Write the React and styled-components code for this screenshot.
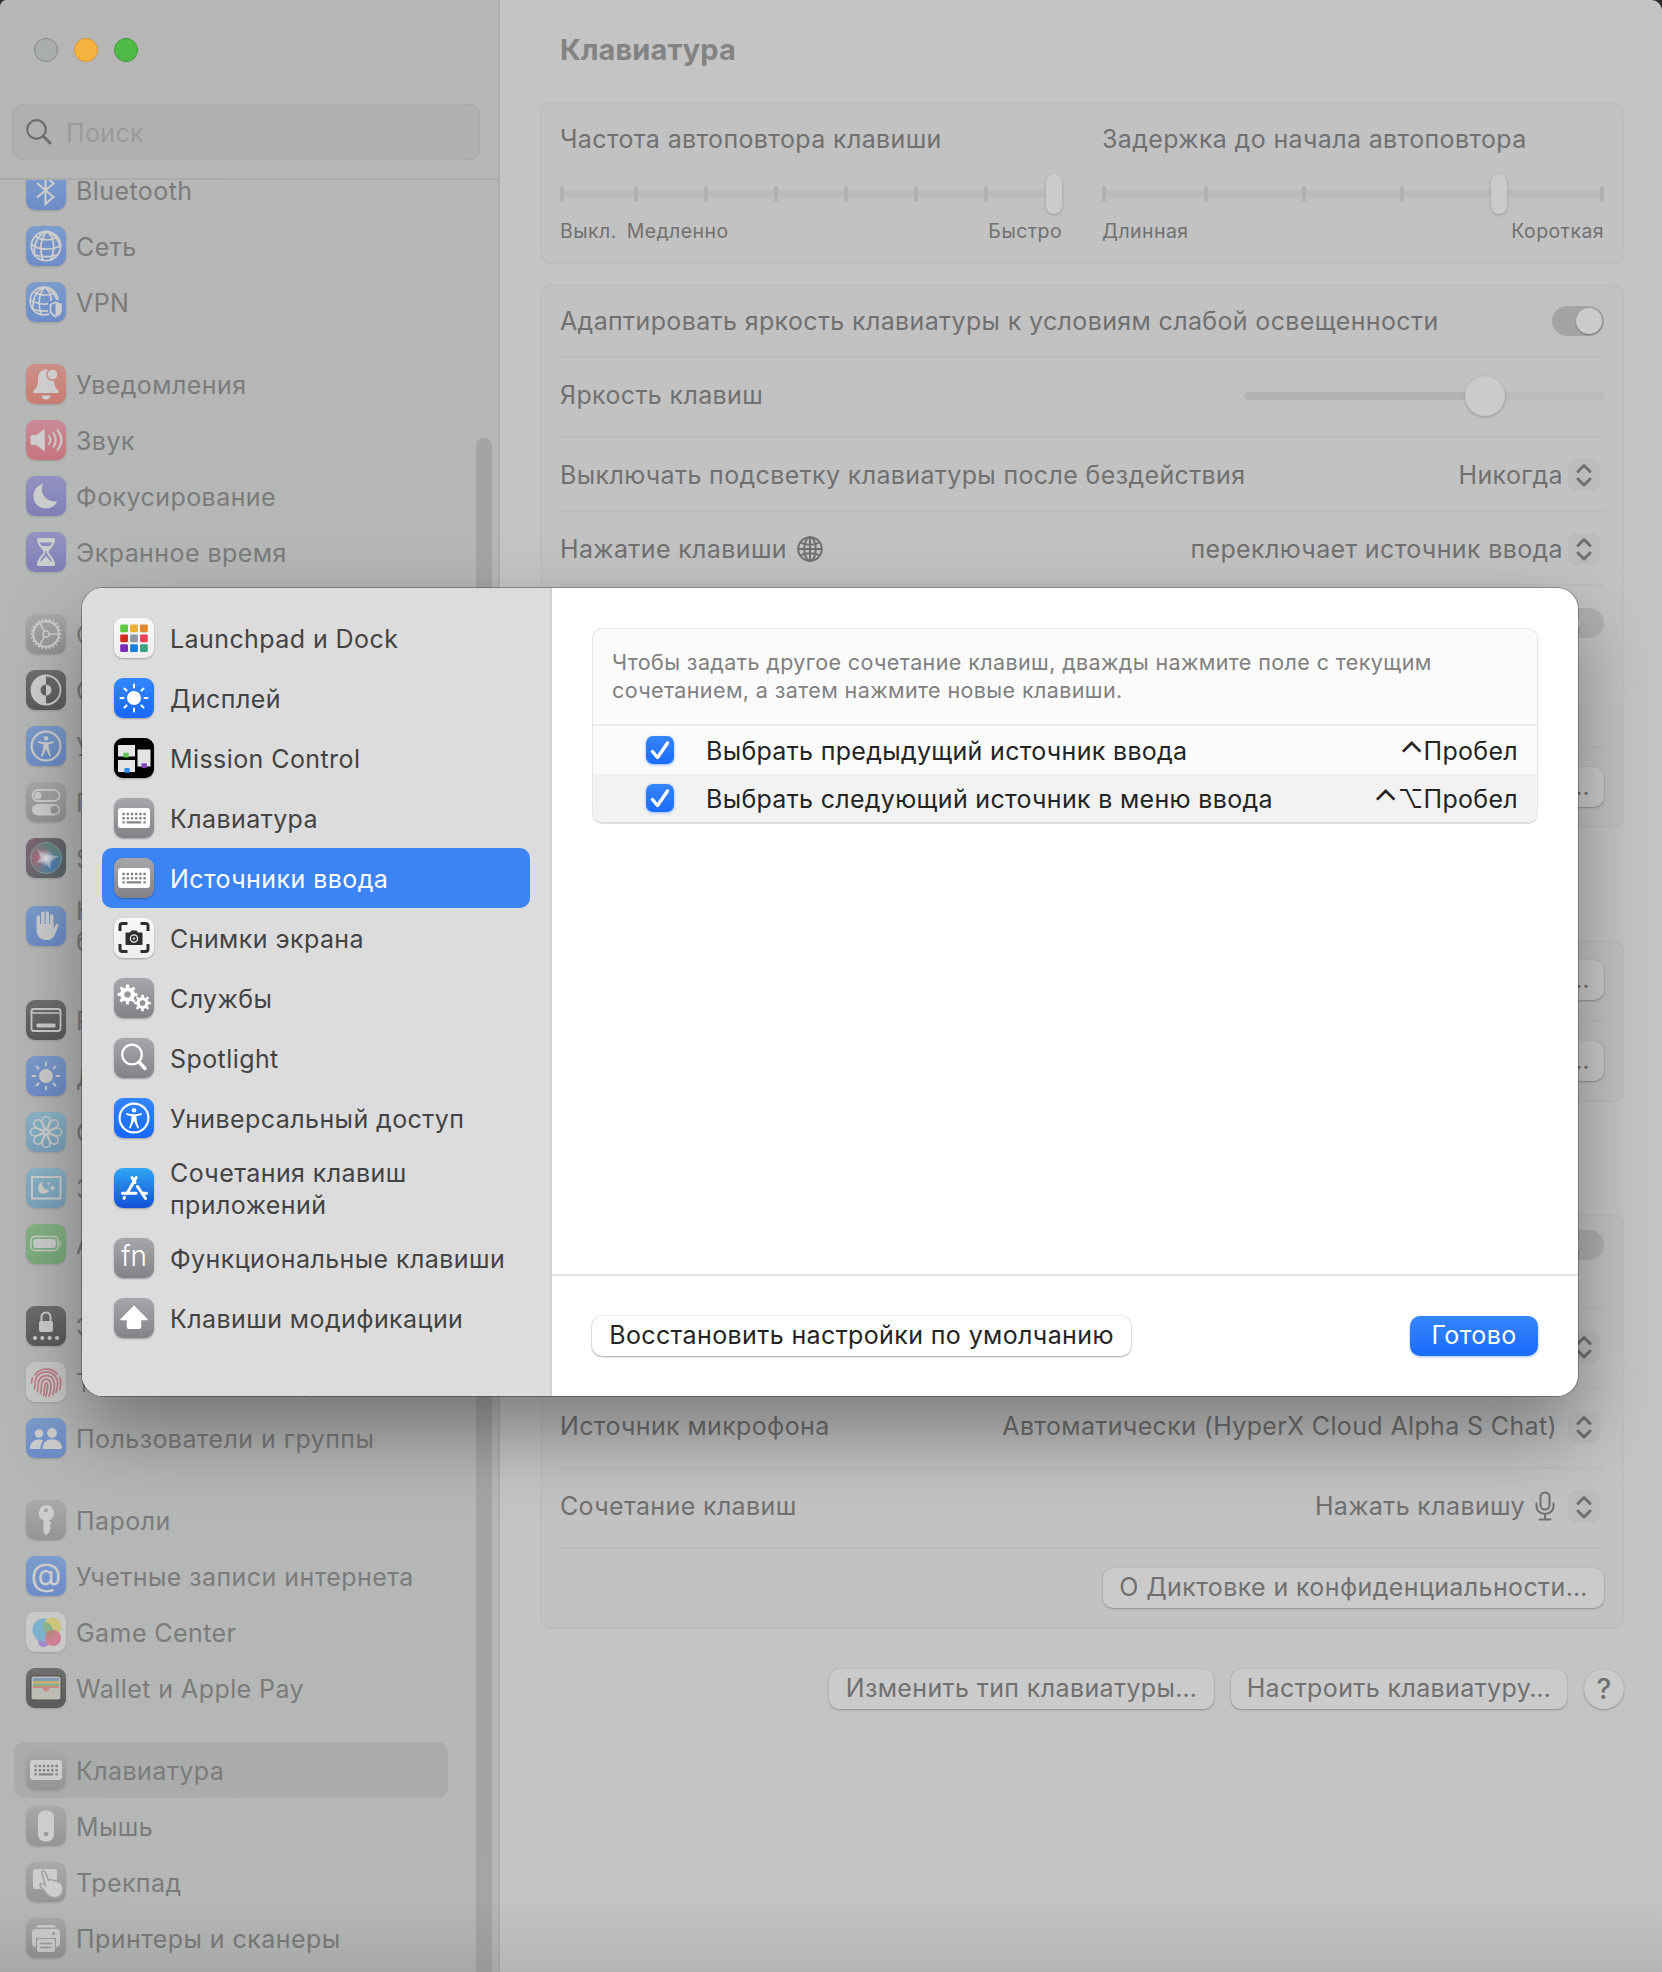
import React from 'react';
import styled, { createGlobalStyle, css } from 'styled-components';

const GlobalStyle = createGlobalStyle`
  *, *::before, *::after { box-sizing: border-box; }
  html, body { margin: 0; padding: 0; background: #2c2c2c; }
  body {
    width: 1662px;
    height: 1972px;
    overflow: hidden;
    font-family: Inter, "Liberation Sans", sans-serif;
    font-size: 25px;
    line-height: 32px;
    letter-spacing: 0.36px;
    -webkit-font-smoothing: antialiased;
  }
`;

/* ---------- glyphs, all on a 40 x 40 grid ---------- */

const stroke = (width = 2) => ({
  fill: 'none',
  stroke: 'currentColor',
  strokeWidth: width,
  strokeLinecap: 'round',
  strokeLinejoin: 'round',
});

const globeLines = (
  <>
    <circle cx="20" cy="20" r="14.6" />
    <path d="M21 5.5C15 11 13 22 17 34.2M21 5.5c7 5 9 17 3.500 28.500M21 5.500C14 7 7.500 15 8.500 28.500M21 5.500c7 2 12 9 13 15" />
    <path d="M9.500 10.500c6 4 15 5 22 .500M5.500 18.500c8 6 20 6 29 1.500M8 28.500c7 3 17 3 24 0" />
  </>
);

const Cog = ({ cx, cy, r }) => (
  <g transform={`translate(${cx} ${cy})`}>
    <circle r={r * 0.62} fill="none" stroke="currentColor" strokeWidth={r * 0.46} />
    {[0, 45, 90, 135, 180, 225, 270, 315].map((a) => (
      <rect key={a} x={-r * 0.17} y={-r * 1.16} width={r * 0.36} height={r * 0.5} rx={r * 0.1} fill="currentColor" transform={`rotate(${a})`} />
    ))}
  </g>
);

const keyDots = [];
[16, 20.2, 24.4].forEach((y, row) => {
  for (let i = 0; i < 6; i += 1) {
    if (row < 2 || i === 0 || i === 5) keyDots.push([8.4 + i * 4.2, y - 1.2]);
  }
});

const glyphs = {
  bluetooth: <path {...stroke(2)} strokeLinejoin="miter" d="M11.500 13.500 27.500 27 19.500 34V6l8 7.500L11.500 27" />,
  network: <g {...stroke(1.8)}>{globeLines}</g>,
  vpn: (
    <>
      <g {...stroke(1.8)} transform="translate(-1 0) scale(.95)">{globeLines}</g>
      <path fill="#7290c9" d="M29.500 17.500 38 20v8.500c0 4-4 7-8.500 8.500-4.500-2-7.500-4.500-7.500-8.500V20Z" />
      <path {...stroke(1.8)} d="M29.500 20.500 24.500 22.500v6c0 2.800 2 4.600 5 6" />
      <path fill="currentColor" d="m29.500 19.500 6.300 2.300v6.800c0 3.200-2.600 5.200-6.300 6.700Z" />
    </>
  ),
  bell: (
    <>
      <path fill="currentColor" d="M20 5.500c-5 0-8 4-8 9 0 7-1.500 9.500-4.500 12.500-.9 1-.4 2 .8 2h23.400c1.200 0 1.700-1 .8-2-3-3-4.500-5.500-4.500-12.500 0-5-3-9-8-9ZM15.500 31.500h9a4.500 4 0 0 1-9 0Z" />
      <circle cx="26.500" cy="10.500" r="6.300" fill="#c78a80" />
      <circle cx="26.500" cy="10.500" r="4.800" fill="currentColor" />
    </>
  ),
  sound: (
    <>
      <path fill="currentColor" d="M4.500 16.500a1.500 1.500 0 0 1 1.500-1.500h4.500l7-5.500c.6-.5 1.300-.2 1.300.6v20c0 .8-.7 1.100-1.300.6l-7-5.700H6a1.500 1.500 0 0 1-1.500-1.500Z" />
      <path {...stroke(1.900)} d="M23 16c1.800 2.500 1.800 5.500 0 8M27.300 13c3.200 4.500 3.200 9.500 0 14M31.500 10c5 6.500 5 13.500 0 20" />
    </>
  ),
  moon: <path fill="currentColor" d="M17 7.500C13 16 19 26.500 31.500 25.500 26 36 8 34.500 7.500 20.500 7.300 14.500 11 9.500 17 7.500Z" />,
  hourglass: (
    <>
      <rect x="11" y="6" width="18" height="4.500" rx="1.500" fill="currentColor" />
      <rect x="11" y="29.500" width="18" height="4.500" rx="1.500" fill="currentColor" />
      <path {...stroke(2)} d="M12.500 9c0 5.500 6 7.500 6 11s-6 5.500-6 11M27.500 9c0 5.500-6 7.500-6 11s6 5.500 6 11" />
      <path fill="currentColor" d="M15 14h10l-4.200 5h-1.600ZM20 24l6 6.500H14Z" />
    </>
  ),
  gear: (
    <>
      <g {...stroke(1.500)}>
        <circle cx="20" cy="20" r="12.800" strokeWidth="2" />
        <circle cx="20" cy="20" r="3" />
        <path d="M23 20h9.500M18.500 17.300 13.700 9M18.500 22.700 13.700 31" />
      </g>
      {Array.from({ length: 24 }, (_, i) => (
        <rect key={i} x="19.200" y="4.600" width="1.600" height="3" fill="currentColor" transform={`rotate(${i * 15} 20 20)`} />
      ))}
    </>
  ),
  appearance: (
    <>
      <circle cx="20" cy="20" r="14.500" fill="none" stroke="currentColor" strokeWidth="1.800" />
      <path fill="currentColor" d="M20 5.500v9a5.500 5.500 0 0 0 0 11v9a14.500 14.500 0 0 1 0-29ZM20 14.500a5.500 5.500 0 0 1 0 11Z" />
    </>
  ),
  accessibility: (
    <>
      <circle cx="20" cy="20" r="14.400" fill="none" stroke="currentColor" strokeWidth="2.200" />
      <circle cx="20" cy="12.300" r="2.200" fill="currentColor" />
      <path fill="currentColor" d="M13 15.300c4.500 1.400 9.500 1.400 14 0 1-.2 1.300 1.200.4 1.600l-4.900 1.400c0 4 .6 7 2.400 11 .4 1.100-1 1.700-1.600.6L20 23l-3.300 6.900c-.6 1.100-2 .5-1.600-.6 1.800-4 2.400-7 2.400-11l-4.900-1.400c-.9-.4-.6-1.800.4-1.600Z" />
    </>
  ),
  switches: (
    <>
      <rect x="6.500" y="8" width="27" height="11" rx="5.500" {...stroke(1.800)} />
      <circle cx="12" cy="13.500" r="3.600" fill="currentColor" />
      <rect x="6" y="22" width="28" height="11.500" rx="5.750" fill="currentColor" />
      <circle cx="28.500" cy="27.700" r="4" fill="#989898" />
    </>
  ),
  siri: (
    <>
      <defs>
        <radialGradient id="siri-rose" cx="0.25" cy="0.5" r="0.5">
          <stop offset="0" stopColor="#b5667c" />
          <stop offset="1" stopColor="#b5667c" stopOpacity="0" />
        </radialGradient>
        <radialGradient id="siri-blue" cx="0.7" cy="0.72" r="0.5">
          <stop offset="0" stopColor="#4d7cb8" />
          <stop offset="1" stopColor="#4d7cb8" stopOpacity="0" />
        </radialGradient>
        <radialGradient id="siri-glow" cx="0.5" cy="0.5" r="0.28">
          <stop offset="0" stopColor="#e2e4ea" />
          <stop offset="1" stopColor="#e2e4ea" stopOpacity="0" />
        </radialGradient>
      </defs>
      <circle cx="20" cy="20" r="15.500" fill="#658783" />
      <circle cx="20" cy="20" r="15.500" fill="url(#siri-rose)" />
      <circle cx="20" cy="20" r="15.500" fill="url(#siri-blue)" />
      <path fill="#c8ccd6" opacity=".6" d="m11 11 9 6 13 1-9 5 1 8-7-7-8 1 5-5Z" />
      <circle cx="20" cy="20" r="15.500" fill="url(#siri-glow)" />
      <circle cx="20" cy="20" r="15.500" fill="none" stroke="#8faaa9" strokeWidth="1" opacity=".7" />
    </>
  ),
  hand: (
    <>
      <path {...stroke(3.400)} d="M12.300 21V11M16.800 19V7.300M21.300 19V7M25.700 20V10" />
      <path fill="currentColor" d="M10.600 18h16.800v5l2.200-4c1.200-2.300 3.700-1.300 2.800 1l-3.700 9c-1.500 3.500-4 5-8 5-6.500 0-10.100-4-10.100-10Z" />
    </>
  ),
  dock: (
    <>
      <rect x="5.500" y="9" width="29" height="22" rx="2.500" {...stroke(1.800)} />
      <path {...stroke(1.500)} d="M6 13h28" />
      <rect x="10.500" y="23.500" width="19" height="4" rx="1" fill="currentColor" />
    </>
  ),
  sun: (
    <>
      <circle cx="20" cy="20" r="7" fill="currentColor" />
      {[0, 45, 90, 135, 180, 225, 270, 315].map((a) => (
        <path key={a} {...stroke(2)} d="M20 9.500V6.500" transform={`rotate(${a} 20 20)`} />
      ))}
    </>
  ),
  flower: (
    <g {...stroke(1.500)}>
      <circle cx="20" cy="20" r="2" />
      {[0, 45, 90, 135, 180, 225, 270, 315].map((a) => (
        <path key={a} d="M20 18C17.500 13.500 16 11 16 8.500a4 4 0 0 1 8 0C24 11 22.500 13.500 20 18Z" transform={`rotate(${a} 20 20)`} />
      ))}
    </g>
  ),
  screensaver: (
    <>
      <rect x="6" y="9" width="28.500" height="21.500" {...stroke(2)} />
      <path fill="currentColor" d="M17 13.500c-2 5 1 9 6.500 8.300C21 28 12 26.500 12 20.500c0-3.500 2-6 5-7ZM26.500 16.500l1 2.500 2.500 1-2.500 1-1 2.500-1-2.500-2.500-1 2.500-1ZM22.500 13.500l.6 1.500 1.400.5-1.400.5-.6 1.500-.6-1.500-1.400-.5 1.400-.5Z" />
    </>
  ),
  battery: (
    <>
      <rect x="5" y="12.500" width="27" height="14" rx="4" {...stroke(1.500)} />
      <rect x="7.300" y="15" width="22.500" height="9" rx="2" fill="currentColor" />
      <path fill="currentColor" d="M33.800 17c1.900.6 1.900 4.400 0 5Z" />
    </>
  ),
  lock: (
    <>
      <rect x="13" y="15" width="14" height="11" rx="2" fill="currentColor" />
      <path {...stroke(2)} d="M15.500 15v-4a4.500 4.500 0 0 1 9 0v4" />
      {[9, 16.300, 23.600, 31].map((x) => <circle key={x} cx={x} cy="32" r="2.100" fill="currentColor" />)}
    </>
  ),
  fingerprint: (
    <g {...stroke(1.700)} stroke="#bd7c85">
      <path d="M9 12.500a14.500 14.500 0 0 1 22-.5M5.500 21c0-2 .3-3.700 1-5.200M34 15.500c1 3.500.8 8-.3 12" />
      <path d="M8.500 27c1-6-1-15.500 10.500-16.800 9-.7 13.500 6 12.500 13.300-.3 3-.8 5-1.500 7" />
      <path d="M11.500 29.500c1.500-5.500-1.500-14 7.500-15.800 8-.9 10.500 6 9 14-.3 2-.8 3.600-1.300 5" />
      <path d="M14.500 31.500c1.800-5-.6-12.500 4.500-14.200 6-.8 6.800 6 5.300 12.700-.4 1.700-.8 3-1.200 4.200" />
      <path d="M17.500 33.500c2-5 .5-12.500 2.600-12.700 2.400 0 1.600 8-.4 13.500" />
    </g>
  ),
  users: (
    <>
      <circle cx="13" cy="15.500" r="4.200" fill="currentColor" />
      <path fill="currentColor" d="M4 29.500c.3-5 4-8 8.800-8 1.700 0 3.300.3 4.600 1.100-2 1.900-2.800 4.500-3 8.400H5.500c-1 0-1.500-.5-1.500-1.500Z" />
      <circle cx="26" cy="15" r="4.900" fill="currentColor" />
      <path fill="currentColor" d="M16.500 29.500c.3-5 4.500-8.300 9.700-8.300s9.500 3.300 9.800 8.300c0 1-.5 1.500-1.500 1.500H18c-1 0-1.500-.5-1.500-1.500Z" />
    </>
  ),
  key: (
    <path
      fill="currentColor"
      fillRule="evenodd"
      d="M20 5a8 8 0 0 1 3.500 15.200v1l2 2.300-2 2.300 1.500 2-1.500 2v2L20 35.200l-2.500-3V20.200A8 8 0 0 1 20 5Zm0 3.200a2.100 2.100 0 1 0 0 4.200 2.100 2.100 0 0 0 0-4.200Z"
    />
  ),
  gamecenter: (
    <>
      <circle cx="17.500" cy="29.500" r="5.500" fill="#a287cb" />
      <circle cx="18" cy="18" r="11.500" fill="#7cb0cd" />
      <circle cx="26" cy="14.500" r="9" fill="#cfc57a" />
      <path fill="#87b28c" d="M18.500 9.500a11.500 11.500 0 0 1 8.800 14A9 9 0 0 1 18.500 9.500Z" />
      <circle cx="27" cy="26" r="8" fill="#cf7f93" />
      <path fill="#b6867d" d="M20 22a8 8 0 0 1 8-4c1 3 0 6-3 8.500-3 0-5-2-5-4.500Z" />
    </>
  ),
  wallet: (
    <>
      <rect x="5" y="8" width="30" height="24" rx="2.500" fill="#bdbdb6" stroke="#4e4e4e" strokeWidth="1" />
      <path fill="#7f9bb3" d="M7 10h26v3H7Z" />
      <path fill="#c9ab74" d="M7 13h26v2.500H7Z" />
      <path fill="#87b184" d="M7 15.500h26V18H7Z" />
      <path fill="#c98a80" d="M7 18h26v2h-8.500c-1.500 0-1.800 3.700-4.500 3.700S17 20 15.500 20H7Z" />
    </>
  ),
  keyboard: (
    <>
      <rect x="4" y="10" width="32" height="20" rx="3" fill="currentColor" />
      {keyDots.map(([x, y]) => <rect key={`${x}-${y}`} x={x} y={y} width="2.400" height="2.400" rx=".5" fill="#858489" />)}
      <rect x="12.600" y="23.200" width="14.600" height="2.400" rx=".5" fill="#858489" />
    </>
  ),
  mouse: (
    <>
      <rect x="12" y="4.500" width="16" height="31" rx="7" fill="currentColor" />
      <circle cx="20" cy="28" r="2.300" fill="#9a9a9b" />
    </>
  ),
  trackpad: (
    <>
      <rect x="7" y="7" width="24" height="20" rx="2.500" fill="currentColor" />
      <path fill="currentColor" stroke="#a0a0a1" strokeWidth="1.500" d="M16 11.500c-.8-2.600 2.400-3.600 3.400-1.200l3 8c3-1.500 4.500-.8 5.500.5 2-.7 3.500 0 4.300 1.400 2.500-.4 3.500 1 4.300 3.800 1.800 6-1 10.500-6.500 11.500-5 .8-8-1.500-11-5.500l-4.500-5.500c-1.500-2.500 1-4 3-2.500l2 1.500Z" />
    </>
  ),
  printer: (
    <>
      <path fill="currentColor" d="M10.500 9.500C10.500 7.800 11.800 7 13.500 7h13c1.700 0 3 .8 3 2.500Z" />
      <path fill="currentColor" d="M6 15c0-2.500 1.500-4 4-4h20c2.500 0 4 1.500 4 4v10c0 2.500-1.500 4-4 4V20H10v9c-2.500 0-4-1.500-4-4Z" />
      <rect x="11" y="21" width="18" height="13" rx="2" fill="currentColor" />
      <path stroke="#9a9a9b" strokeWidth="1.600" strokeLinecap="round" d="M15 25.500h10M15 29.500h10" />
      <circle cx="27.500" cy="15.500" r="1.500" fill="#9a9a9b" />
    </>
  ),
  launchpad: (
    <>
      {[
        ['#62c83f', '#f0b02e', '#e5872a'],
        ['#cf2b1c', '#8c99a0', '#ea4155'],
        ['#7b2ab6', '#1b7fdd', '#3aa384'],
      ].map((line, r) => line.map((fill, c) => (
        <rect key={fill} x={6.200 + c * 9.900} y={6.500 + r * 9.900} width="7.800" height="7.800" rx="1.400" fill={fill} />
      )))}
    </>
  ),
  mission: (
    <>
      <rect x="4" y="7" width="17" height="11.500" fill="#e4e4e4" />
      <rect x="4" y="22" width="17" height="12" fill="#e4e4e4" />
      <rect x="23.500" y="11.500" width="13" height="17" fill="#e4e4e4" />
      <rect x="9.300" y="14.700" width="5.500" height="4.800" rx="1" fill="#61c554" />
      <rect x="10.300" y="30" width="5.500" height="4.800" rx="1" fill="#3291f0" />
      <rect x="27.500" y="25.200" width="5.500" height="4.800" rx="1" fill="#8546c4" />
    </>
  ),
  screenshot: (
    <>
      <path fill="none" stroke="#2e2e2e" strokeWidth="3" d="M6 13V8q0-2.500 2.500-2.500h5M26.500 5.500h5Q34 5.500 34 8v5M34 26v5q0 2.500-2.500 2.500h-5M13.500 33.500h-5Q6 33.500 6 31v-5" />
      <path fill="#2e2e2e" d="M12.500 14.500H16l1.500-2h5l1.500 2h3.500c.6 0 1 .4 1 1V26c0 .6-.4 1-1 1h-15c-.6 0-1-.4-1-1V15.500c0-.6.400-1 1-1Z" />
      <circle cx="20" cy="20.500" r="3.600" fill="#2e2e2e" stroke="#f4f4f4" strokeWidth="1.300" />
      <circle cx="20" cy="20.500" r="1.300" fill="#c9c9c9" />
    </>
  ),
  services: (
    <>
      <Cog cx={13.5} cy={16.5} r={8.6} />
      <Cog cx={28.500} cy={25} r={7.2} />
    </>
  ),
  spotlight: (
    <>
      <circle cx="18" cy="16.500" r="9.800" {...stroke(2.200)} />
      <path {...stroke(3.400)} d="m25.500 24.500 5.500 6" />
    </>
  ),
  appstore: (
    <g {...stroke(3)}>
      <path d="M22.200 9.500 13 25.500M18 9.500l3 5M23.500 18.500 31.500 30.500" />
      <path d="M8.500 25.200h13.500M28.500 25.200h4" />
      <path d="m10.500 29.300-.5 1" />
    </g>
  ),
  shift: <path fill="currentColor" stroke="currentColor" strokeWidth="1.500" strokeLinejoin="round" d="M20 8.500 33 21.500h-6.500V29c0 .8-.5 1.300-1.300 1.300H14.800c-.8 0-1.300-.5-1.300-1.300v-7.500H7Z" />,
};

const dimTones = {
  blue: 'linear-gradient(#7c9ccb, #6d8cc8)',
  red: 'linear-gradient(#cb9089, #c77d72)',
  pink: 'linear-gradient(#c98a97, #c6747e)',
  violet: 'linear-gradient(#9392c1, #807fb6)',
  gray: 'linear-gradient(#a9a9aa, #949496)',
  black: 'linear-gradient(#6f6f6f, #5b5b5b)',
  sky: 'linear-gradient(#8bb5c6, #7ba2bc)',
  green: 'linear-gradient(#86b486, #7aab7c)',
  white: '#c9c9c9',
  siri: 'linear-gradient(120deg, #806874, #56676a)',
};

const brightTones = {
  blue: 'linear-gradient(#3287fd, #1867fa)',
  gray: 'linear-gradient(#a7a6ab, #838287)',
  black: '#000',
  white: 'linear-gradient(#f8f8f8, #eeeeee)',
  store: 'linear-gradient(#2ea6f4, #1450d8)',
};

const Tile = styled.span`
  flex: none;
  width: 40px;
  height: 40px;
  border-radius: 9px;
  display: flex;
  align-items: center;
  justify-content: center;
  background: ${(p) => (p.$bright ? brightTones : dimTones)[p.$tone]};
  color: ${(p) => (p.$bright ? '#fff' : '#cdcdcd')};
  box-shadow: 0 1px 2px rgba(0, 0, 0, ${(p) => (p.$bright ? 0.28 : 0.14)});
  font-size: ${(p) => (p.$textSize || 26)}px;
  font-weight: ${(p) => p.$weight || 400};
  padding-bottom: ${(p) => (p.$textSize ? 3 : 0)}px;
  line-height: 37px;
  letter-spacing: 0;
`;

const Glyph = styled.svg`
  display: block;
  width: 40px;
  height: 40px;
`;

const IconTile = ({ name, tone, bright }) => {
  if (name === 'fn') return <Tile $tone={tone} $bright={bright} $textSize={28} $weight={300}>fn</Tile>;
  if (name === 'at') return <Tile $tone={tone} $bright={bright} $textSize={32}>@</Tile>;
  return (
    <Tile $tone={tone} $bright={bright}>
      <Glyph viewBox="0 0 40 40">{glyphs[name]}</Glyph>
    </Tile>
  );
};

/* ---------- window ---------- */

const Window = styled.div`
  position: relative;
  display: grid;
  grid-template-columns: 500px 1fr;
  width: 1662px;
  height: 1972px;
  overflow: hidden;
  border-radius: 7px 11px 0 0;
  background: #c4c4c4;

  &::after {
    content: '';
    position: absolute;
    inset: auto 0 0 0;
    height: 76px;
    background: linear-gradient(rgba(0, 0, 0, 0), rgba(0, 0, 0, 0.08));
    pointer-events: none;
  }
`;

const Sidebar = styled.aside`
  display: flex;
  flex-direction: column;
  min-height: 0;
  background: linear-gradient(175deg, #b6b6b6 0%, #b5b7b6 30%, #b5b5b5 60%, #b5b8b7 100%);
  border-right: 2px solid #aeafaf;
  color: #7b7b7b;
`;

const SidebarHead = styled.div`
  flex: none;
  height: 180px;
  border-bottom: 2px solid #a9aaaa;
  padding: 38px 18px 0 12px;
`;

const Lights = styled.div`
  display: flex;
  gap: 16px;
  padding-left: 22px;
`;

const Light = styled.span`
  width: 24px;
  height: 24px;
  border-radius: 50%;
  background: ${(p) => p.$fill};
  border: 1px solid ${(p) => p.$edge};
`;

const Search = styled.div`
  display: flex;
  align-items: center;
  gap: 14px;
  height: 56px;
  margin-top: 42px;
  padding-left: 13px;
  border: 1px solid #a9a9a9;
  border-radius: 11px;
  background: #b0b0b0;
  color: #9a9a9a;
`;

const SearchGlyph = styled.svg`
  width: 26px;
  height: 26px;
  color: #6d6d6d;
`;

const SidebarBody = styled.div`
  flex: 1;
  min-height: 0;
  display: flex;
  justify-content: space-between;
  overflow: hidden;
`;

const NavList = styled.nav`
  display: flex;
  flex-direction: column;
  gap: 26px;
  margin-top: -18px;
  padding-left: 14px;
  width: 448px;
  letter-spacing: 0.43px;
`;

const NavGroup = styled.div`
  display: flex;
  flex-direction: column;
`;

const NavItem = styled.div`
  display: flex;
  align-items: center;
  gap: 10px;
  height: ${(p) => (p.$tall ? 80 : 56)}px;
  padding-left: 12px;
  border-radius: 10px;
  line-height: 31px;
  ${(p) => p.$active && css`background: rgba(80, 75, 80, 0.1);`}
`;

const ItemText = styled.span`
  padding-top: 2px;
`;

const ScrollTrack = styled.div`
  width: 22px;
  padding-top: 258px;
`;

const ScrollThumb = styled.div`
  width: 16px;
  height: 100%;
  border-radius: 8px 8px 0 0;
  background: rgba(60, 55, 55, 0.14);
`;

/* ---------- settings pane ---------- */

const Pane = styled.main`
  padding: 0 38px 0 40px;
  color: #707070;
`;

const Title = styled.h1`
  margin: 0;
  height: 102px;
  padding: 30px 20px 0;
  font-size: 29px;
  line-height: 40px;
  font-weight: 700;
  letter-spacing: 0.1px;
  color: #838383;
`;

const Card = styled.section`
  border: 2px solid #bebebe;
  border-radius: 11px;
  padding: 0 18px;
  background: #c2c2c2;
  margin-bottom: ${(p) => p.$after}px;
`;

const Row = styled.div`
  display: flex;
  align-items: ${(p) => (p.$top ? 'flex-start' : 'center')};
  justify-content: space-between;
  height: ${(p) => p.$height}px;
  padding-top: ${(p) => p.$top || p.$down || 0}px;
  padding-bottom: ${(p) => p.$up || 0}px;
  &:not(:last-child) { border-bottom: 2px solid #bdbdbd; }
`;

const RowLabel = styled.span`
  display: flex;
  align-items: center;
  gap: 10px;
  white-space: nowrap;
  padding-bottom: ${(p) => p.$lift || 0}px;
`;

const RowValue = styled.span`
  display: flex;
  align-items: center;
  gap: ${(p) => p.$gap || 5}px;
  margin-right: 4px;
  white-space: nowrap;
`;

const Repeat = styled.div`
  display: grid;
  grid-template-columns: 502px 502px;
  gap: 40px;
  height: 158px;
`;

const RepeatColumn = styled.div`
  display: flex;
  flex-direction: column;
  padding-top: 19px;
`;

const Track = styled.div`
  position: relative;
  height: 8px;
  margin: 35px 0 18px;
  border-radius: 4px;
  background: #bbbbbb;
`;

const Tick = styled.span`
  position: absolute;
  top: -4px;
  width: 4px;
  height: 16px;
  border-radius: 2px;
  background: #b0b0b0;
`;

const Thumb = styled.span`
  position: absolute;
  top: -16px;
  width: 16px;
  height: 40px;
  border-radius: 8px;
  background: #cbcbcb;
  box-shadow: 0 1px 3px rgba(0, 0, 0, 0.22);
`;

const Scale = styled.div`
  display: flex;
  font-size: 19.500px;
  line-height: 30px;
  letter-spacing: 0.42px;
  gap: 10px;
  span:last-child { margin-left: auto; }
`;

const Level = styled.div`
  position: relative;
  width: 360px;
  height: 8px;
  border-radius: 4px;
  background: linear-gradient(to right, #b3b3b3 66%, #bbbbbb 66%);
`;

const LevelKnob = styled.span`
  position: absolute;
  top: -16px;
  left: 221px;
  width: 40px;
  height: 40px;
  border-radius: 50%;
  background: #cbcbcb;
  box-shadow: 0 1px 3px rgba(0, 0, 0, 0.24);
`;

const Toggle = styled.span`
  display: flex;
  justify-content: ${(p) => (p.$on ? 'flex-end' : 'flex-start')};
  width: 52px;
  height: 30px;
  padding: 2px;
  border-radius: 15px;
  background: ${(p) => (p.$on ? '#a4a4a4' : '#b0b0b0')};
  &::after {
    content: '';
    width: 26px;
    height: 26px;
    border-radius: 50%;
    background: #cccccc;
    box-shadow: 0 1px 2px rgba(0, 0, 0, 0.3);
  }
`;

const StepperBox = styled.span`
  display: flex;
  width: 32px;
  height: 32px;
  border-radius: 8px;
  background: #bcbcbc;
  svg { width: 32px; height: 32px; }
`;

const Stepper = () => (
  <StepperBox>
    <svg viewBox="0 0 32 32" fill="none" stroke="currentColor" strokeWidth="3" strokeLinecap="round" strokeLinejoin="round">
      <path d="m10 12.500 6-6 6 6M10 20l6 6 6-6" />
    </svg>
  </StepperBox>
);

const PushButton = styled.button`
  height: 40px;
  padding: 0 14px 2px;
  border: 0;
  border-radius: 10px;
  background: #cbcbcb;
  color: #707070;
  font: inherit;
  letter-spacing: 0.38px;
  white-space: nowrap;
  width: ${(p) => (p.$width ? `${p.$width}px` : 'auto')};
  box-shadow: 0 1px 2px rgba(0, 0, 0, 0.25), 0 0 1px rgba(0, 0, 0, 0.15);
  ${(p) => p.$kind === 'plain' && css`
    background: #fff;
    color: #242424;
    box-shadow: 0 1px 2px rgba(0, 0, 0, 0.3), 0 0 0 1px rgba(0, 0, 0, 0.06);
  `}
  ${(p) => p.$kind === 'primary' && css`
    background: linear-gradient(#3686fb, #1a6bfb);
    color: #fff;
    box-shadow: 0 1px 3px rgba(24, 105, 250, 0.4);
  `}
`;

const Help = styled(PushButton)`
  width: 40px;
  padding: 0;
  border-radius: 50%;
  font-weight: 500;
  font-size: 28px;
`;

const ButtonBar = styled.div`
  display: flex;
  justify-content: flex-end;
  gap: 17px;
`;

const GlobeMark = () => (
  <svg width="26" height="26" viewBox="0 0 26 26" fill="none" stroke="currentColor" strokeWidth="2">
    <circle cx="13" cy="13" r="11.800" />
    <ellipse cx="13" cy="13" rx="5.800" ry="11.800" />
    <path d="M13 1v24M1 13h24M3.500 6.500c5 3 14 3 19 0M3.500 19.500c5-3 14-3 19 0" />
  </svg>
);

const MicSvg = styled.svg`
  margin: -3px 3px 0 0;
`;

const MicMark = () => (
  <MicSvg width="20" height="30" viewBox="0 0 20 30" fill="none" stroke="currentColor" strokeWidth="2" strokeLinecap="round">
    <rect x="5.500" y="1.500" width="9" height="17" rx="4.500" />
    <path d="M1.500 12.500v3a8.500 7.500 0 0 0 17 0v-3M10 23.500v4.500M4.500 28.500h11" />
  </MicSvg>
);

/* ---------- shortcuts sheet ---------- */

const Sheet = styled.div`
  position: absolute;
  top: 588px;
  left: 82px;
  width: 1496px;
  height: 808px;
  display: grid;
  grid-template-columns: 470px 1fr;
  overflow: hidden;
  border-radius: 21px;
  background: #fff;
`;

const SheetShadow = styled.div`
  position: absolute;
  top: 588px;
  left: 82px;
  width: 1496px;
  height: 808px;
  border-radius: 21px;
  box-shadow: 0 0 0 1px rgba(0, 0, 0, 0.28), 0 36px 76px rgba(0, 0, 0, 0.36);
`;

const SheetNav = styled.nav`
  padding: 20px;
  background: #dcdcdc;
  border-right: 2px solid #d0d0d0;
`;

const SheetItem = styled.div`
  display: flex;
  align-items: center;
  gap: 16px;
  width: 428px;
  height: ${(p) => (p.$tall ? 80 : 60)}px;
  padding-left: 12px;
  border-radius: 10px;
  letter-spacing: 0.42px;
  color: ${(p) => (p.$active ? '#fff' : '#434343')};
  background: ${(p) => (p.$active ? '#3c84f4' : 'none')};
  white-space: pre-line;
`;

const SheetMain = styled.div`
  display: flex;
  flex-direction: column;
`;

const SheetContent = styled.div`
  flex: 1;
  padding: 40px;
`;

const Shortcuts = styled.div`
  border: 1px solid #e6e6e6;
  border-bottom: 2px solid #dcdcdc;
  border-radius: 10px;
  overflow: hidden;
  background: #fbfbfb;
  color: #242424;
`;

const Hint = styled.p`
  margin: 0;
  height: 97px;
  padding: 19px 19px 0;
  border-bottom: 2px solid #ebebeb;
  font-size: 21.500px;
  line-height: 28px;
  letter-spacing: 0.39px;
  color: #808080;
  white-space: pre-line;
`;

const Shortcut = styled.div`
  display: flex;
  align-items: center;
  height: 48px;
  padding: 2px 19px 0 53px;
  letter-spacing: 0.31px;
  &:nth-child(odd) { background: #f2f2f2; }
`;

const Check = styled.span`
  display: flex;
  width: 28px;
  height: 28px;
  margin: -3px 32px 0 0;
  border-radius: 7px;
  background: linear-gradient(#3686fb, #1a6bfb);
  box-shadow: 0 1px 3px rgba(24, 105, 250, 0.45);
`;

const Keys = styled.span`
  margin-left: auto;
`;

const ControlKey = styled.span`
  font-size: 33px;
  line-height: 0;
  letter-spacing: -1px;
  vertical-align: -5px;
`;

const SheetFooter = styled.footer`
  display: flex;
  justify-content: space-between;
  height: 122px;
  padding: 40px;
  border-top: 2px solid #e5e5e5;
`;

/* ---------- data ---------- */

const navGroups = [
  [
    ['bluetooth', 'blue', 'Bluetooth'],
    ['network', 'blue', 'Сеть'],
    ['vpn', 'blue', 'VPN'],
  ],
  [
    ['bell', 'red', 'Уведомления'],
    ['sound', 'pink', 'Звук'],
    ['moon', 'violet', 'Фокусирование'],
    ['hourglass', 'violet', 'Экранное время'],
  ],
  [
    ['gear', 'gray', 'Основные'],
    ['appearance', 'black', 'Оформление'],
    ['accessibility', 'blue', 'Универсальный доступ'],
    ['switches', 'gray', 'Пункт управления'],
    ['siri', 'siri', 'Siri и Spotlight'],
    ['hand', 'blue', 'Конфиденциальность и безопасность', true],
  ],
  [
    ['dock', 'black', 'Рабочий стол и Dock'],
    ['sun', 'blue', 'Дисплеи'],
    ['flower', 'sky', 'Обои'],
    ['screensaver', 'sky', 'Заставка'],
    ['battery', 'green', 'Аккумулятор'],
  ],
  [
    ['lock', 'black', 'Экран блокировки'],
    ['fingerprint', 'white', 'Touch ID и код-пароль'],
    ['users', 'blue', 'Пользователи и группы'],
  ],
  [
    ['key', 'gray', 'Пароли'],
    ['at', 'blue', 'Учетные записи интернета'],
    ['gamecenter', 'white', 'Game Center'],
    ['wallet', 'black', 'Wallet и Apple Pay'],
  ],
  [
    ['keyboard', 'gray', 'Клавиатура'],
    ['mouse', 'gray', 'Мышь'],
    ['trackpad', 'gray', 'Трекпад'],
    ['printer', 'gray', 'Принтеры и сканеры'],
  ],
];

const sheetItems = [
  ['launchpad', 'white', 'Launchpad и Dock'],
  ['sun', 'blue', 'Дисплей'],
  ['mission', 'black', 'Mission Control'],
  ['keyboard', 'gray', 'Клавиатура'],
  ['keyboard', 'gray', 'Источники ввода'],
  ['screenshot', 'white', 'Снимки экрана'],
  ['services', 'gray', 'Службы'],
  ['spotlight', 'gray', 'Spotlight'],
  ['accessibility', 'blue', 'Универсальный доступ'],
  ['appstore', 'store', 'Сочетания клавиш\nприложений', true],
  ['fn', 'gray', 'Функциональные клавиши'],
  ['shift', 'gray', 'Клавиши модификации'],
];

const shortcuts = [
  ['Выбрать предыдущий источник ввода', 'Пробел'],
  ['Выбрать следующий источник в меню ввода', '⌥Пробел'],
];

const StopSlider = ({ ticks, value }) => (
  <Track>
    {ticks.map((x) => <Tick key={x} style={{ left: x }} />)}
    <Thumb style={{ left: value }} />
  </Track>
);

export default function App() {
  return (
    <>
      <GlobalStyle />
      <Window>
        <Sidebar>
          <SidebarHead>
            <Lights>
              <Light $fill="#a9adab" $edge="#868888" />
              <Light $fill="#f6b33f" $edge="#dc9530" />
              <Light $fill="#4fba48" $edge="#3a9c35" />
            </Lights>
            <Search>
              <SearchGlyph viewBox="0 0 26 26" fill="none" stroke="currentColor" strokeLinecap="round">
                <circle cx="10.500" cy="10.500" r="9.300" strokeWidth="2.200" />
                <path d="m17.500 17.500 6.500 6.500" strokeWidth="3" />
              </SearchGlyph>
              <ItemText>Поиск</ItemText>
            </Search>
          </SidebarHead>
          <SidebarBody>
            <NavList>
              {navGroups.map((group) => (
                <NavGroup key={group[0][2]}>
                  {group.map(([name, tone, label, tall]) => (
                    <NavItem key={label} $tall={tall} $active={label === 'Клавиатура'}>
                      <IconTile name={name} tone={tone} />
                      <ItemText>{label}</ItemText>
                    </NavItem>
                  ))}
                </NavGroup>
              ))}
            </NavList>
            <ScrollTrack><ScrollThumb /></ScrollTrack>
          </SidebarBody>
        </Sidebar>

        <Pane>
          <Title>Клавиатура</Title>
          <Card $after={20}>
            <Repeat>
              <RepeatColumn>
                <span>Частота автоповтора клавиши</span>
                <StopSlider ticks={[0, 74, 144, 214, 284, 354, 424]} value={486} />
                <Scale><span>Выкл.</span><span>Медленно</span><span>Быстро</span></Scale>
              </RepeatColumn>
              <RepeatColumn>
                <span>Задержка до начала автоповтора</span>
                <StopSlider ticks={[0, 102, 200, 298, 498]} value={389} />
                <Scale><span>Длинная</span><span>Короткая</span></Scale>
              </RepeatColumn>
            </Repeat>
          </Card>

          <Card $after={112}>
            <Row $height={72}>
              <RowLabel>Адаптировать яркость клавиатуры к условиям слабой освещенности</RowLabel>
              <Toggle $on />
            </Row>
            <Row $height={80} $up={2}>
              <RowLabel $lift={2}>Яркость клавиш</RowLabel>
              <Level><LevelKnob /></Level>
            </Row>
            <Row $height={74} $down={2}>
              <RowLabel>Выключать подсветку клавиатуры после бездействия</RowLabel>
              <RowValue>Никогда<Stepper /></RowValue>
            </Row>
            <Row $height={74} $down={2}>
              <RowLabel>Нажатие клавиши <GlobeMark /></RowLabel>
              <RowValue>переключает источник ввода<Stepper /></RowValue>
            </Row>
            <Row $height={162} $top={22}>
              <RowLabel />
              <Toggle />
            </Row>
            <Row $height={78}>
              <RowLabel />
              <PushButton>Сочетания клавиш…</PushButton>
            </Row>
          </Card>

          <Card $after={112}>
            <Row $height={80} $up={2}>
              <RowLabel />
              <PushButton>Изменить…</PushButton>
            </Row>
            <Row $height={78}>
              <RowLabel />
              <PushButton>Замена текста…</PushButton>
            </Row>
          </Card>

          <Card $after={40}>
            <Row $height={93} $top={14}>
              <RowLabel />
              <Toggle />
            </Row>
            <Row $height={80} $up={2}>
              <RowLabel />
              <RowValue><Stepper /></RowValue>
            </Row>
            <Row $height={80} $up={2}>
              <RowLabel $lift={2}>Источник микрофона</RowLabel>
              <RowValue $gap={11}><RowLabel $lift={2}>Автоматически (HyperX Cloud Alpha S Chat)</RowLabel><Stepper /></RowValue>
            </Row>
            <Row $height={80} $up={2}>
              <RowLabel $lift={2}>Сочетание клавиш</RowLabel>
              <RowValue $gap={10}><RowLabel $lift={2}>Нажать клавишу</RowLabel><MicMark /><Stepper /></RowValue>
            </Row>
            <Row $height={78}>
              <RowLabel />
              <PushButton $width={501}>О Диктовке и конфиденциальности…</PushButton>
            </Row>
          </Card>

          <ButtonBar>
            <PushButton $width={385}>Изменить тип клавиатуры…</PushButton>
            <PushButton $width={336}>Настроить клавиатуру…</PushButton>
            <Help>?</Help>
          </ButtonBar>
        </Pane>

        <SheetShadow />
        <Sheet>
          <SheetNav>
            {sheetItems.map(([name, tone, label, tall]) => (
              <SheetItem key={label} $tall={tall} $active={label === 'Источники ввода'}>
                <IconTile name={name} tone={tone} bright />
                <ItemText>{label}</ItemText>
              </SheetItem>
            ))}
          </SheetNav>
          <SheetMain>
            <SheetContent>
              <Shortcuts>
                <Hint>{'Чтобы задать другое сочетание клавиш, дважды нажмите поле с текущим\nсочетанием, а затем нажмите новые клавиши.'}</Hint>
                {shortcuts.map(([label, keys]) => (
                  <Shortcut key={label}>
                    <Check>
                      <svg width="28" height="28" viewBox="0 0 28 28" fill="none" stroke="#fff" strokeWidth="3.400" strokeLinecap="round" strokeLinejoin="round">
                        <path d="m6.500 15.500 5 6L21.500 7" />
                      </svg>
                    </Check>
                    {label}
                    <Keys><ControlKey>⌃</ControlKey>{keys}</Keys>
                  </Shortcut>
                ))}
              </Shortcuts>
            </SheetContent>
            <SheetFooter>
              <PushButton $kind="plain" $width={539}>Восстановить настройки по умолчанию</PushButton>
              <PushButton $kind="primary" $width={128}>Готово</PushButton>
            </SheetFooter>
          </SheetMain>
        </Sheet>
      </Window>
    </>
  );
}
